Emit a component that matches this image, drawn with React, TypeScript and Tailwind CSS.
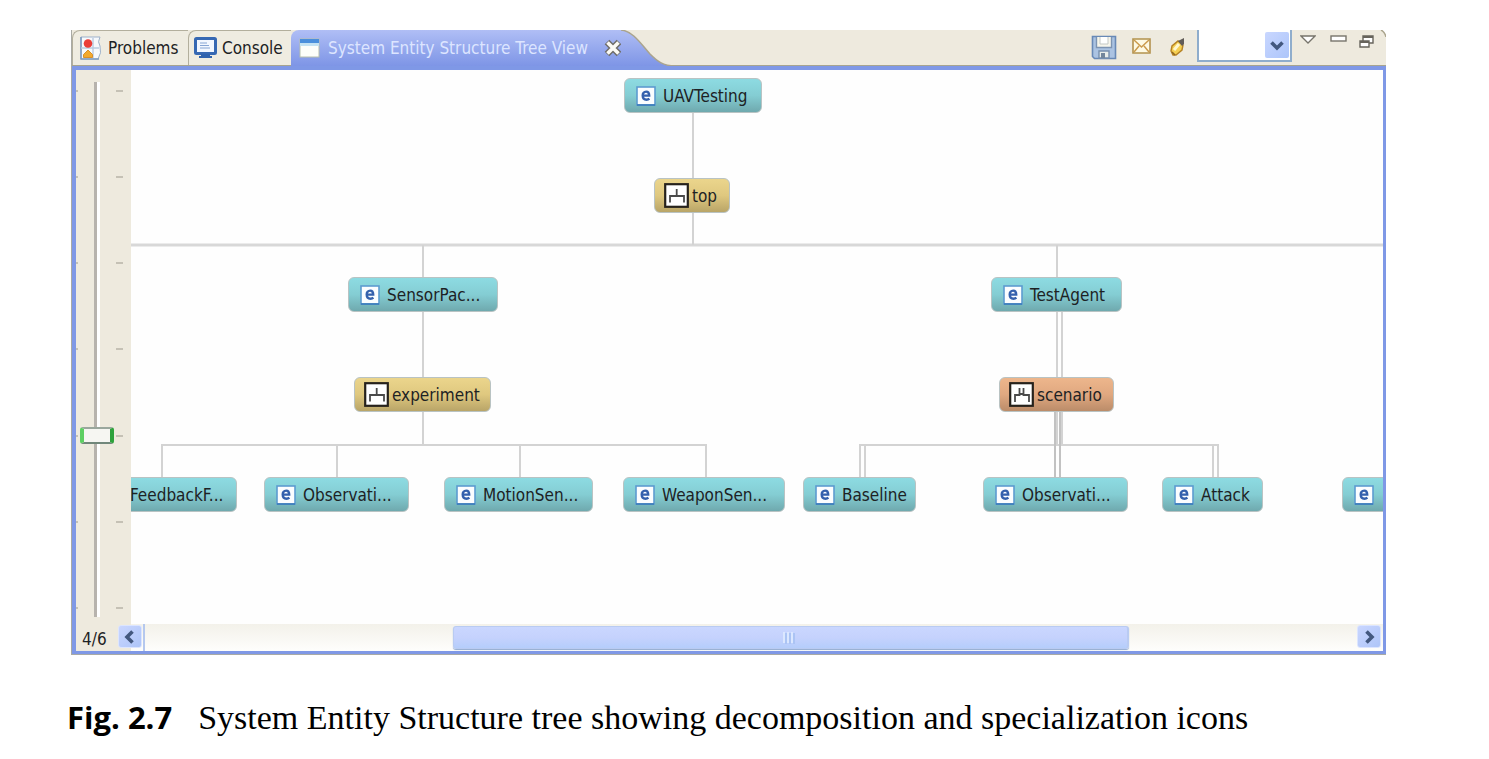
import React from 'react';

type NodeKind = 'entity' | 'aspect' | 'specialization';

interface TreeNode {
  label: string;
  kind: NodeKind;
  place: string;
}

const nodes: TreeNode[] = [
  { label: 'UAVTesting', kind: 'entity', place: 'left-[493px] top-2 w-[138px]' },
  { label: 'top', kind: 'aspect', place: 'left-[523px] top-[108px] w-[76px]' },
  { label: 'SensorPac...', kind: 'entity', place: 'left-[217px] top-[207px] w-[150px]' },
  { label: 'TestAgent', kind: 'entity', place: 'left-[860px] top-[207px] w-[131px]' },
  { label: 'experiment', kind: 'aspect', place: 'left-[223px] top-[307px] w-[137px]' },
  { label: 'scenario', kind: 'specialization', place: 'left-[868px] top-[307px] w-[115px]' },
  { label: 'FeedbackF...', kind: 'entity', place: '-left-[40px] top-[407px] w-[146px]' },
  { label: 'Observati...', kind: 'entity', place: 'left-[133px] top-[407px] w-[145px]' },
  { label: 'MotionSen...', kind: 'entity', place: 'left-[313px] top-[407px] w-[149px]' },
  { label: 'WeaponSen...', kind: 'entity', place: 'left-[492px] top-[407px] w-[162px]' },
  { label: 'Baseline', kind: 'entity', place: 'left-[672px] top-[407px] w-[113px]' },
  { label: 'Observati...', kind: 'entity', place: 'left-[852px] top-[407px] w-[145px]' },
  { label: 'Attack', kind: 'entity', place: 'left-[1031px] top-[407px] w-[101px]' },
  { label: '', kind: 'entity', place: 'left-[1211px] top-[407px] w-[150px]' },
];

const fills: Record<NodeKind, string> = {
  entity: 'gap-[7px] pl-[11px] from-[#8ddbe2] via-[#84cdd3] to-[#6fa9ae]',
  aspect: 'gap-[3px] pl-[9px] from-[#ebd58c] via-[#dfc87f] to-[#b9a568]',
  specialization: 'gap-[3px] pl-[9px] from-[#edb68c] via-[#e0a880] to-[#bb8c69]',
};

function EntityIcon() {
  return (
    <svg width="20" height="20" viewBox="0 0 20 20" className="shrink-0" aria-hidden="true">
      <rect x="1" y="1" width="18" height="18" fill="#fbfdff" stroke="#5d9bd0" strokeWidth="1.6" />
      <path d="M1 19H19" stroke="#3878b8" strokeWidth="1.6" />
      <path d="M6.500 9.600H13.200C13.200 6.700 12.200 5.600 10.200 5.600C7.900 5.600 6.700 7.200 6.700 9.600C6.700 12.200 8 13.700 10.500 13.700C11.700 13.700 12.600 13.400 13.400 12.700" fill="none" stroke="#3561ad" strokeWidth="2.400" />
    </svg>
  );
}

function BranchIcon({ double }: { double: boolean }) {
  return (
    <svg width="25" height="25" viewBox="0 0 25 25" className="shrink-0" aria-hidden="true">
      <rect x="1.200" y="1.200" width="22.600" height="22.600" fill="#fff" stroke="#26221c" strokeWidth="2.200" />
      <path
        d={double ? 'M6 20V13H10.500V6M20 20V13H14.500V6M10.500 12H14.500' : 'M6 19.500V13H20V19.500M12.700 13V6'}
        fill="none"
        stroke="#4a4a4a"
        strokeWidth="1.800"
      />
    </svg>
  );
}

function TreeCanvas() {
  return (
    <div className="relative h-[554px] min-w-0 flex-1 overflow-hidden bg-[#fefefe]">
      <svg className="absolute inset-0 h-full w-full" aria-hidden="true" fill="none" stroke="#d3d3d3" strokeWidth="2">
        <path d="M0 175H4000" strokeWidth="3" stroke="#d8d8d8" />
        <path d="M562 42V175M292 175V374M926 175V208M30 375H576M31 374V408M206 374V408M389 374V408M575 374V408" />
        <path d="M926 240V374M931 240V374M728 375H1088" />
        <path d="M924 340V408M929 340V408" stroke="#c2c2c2" />
        <path d="M729 374V408M734 374V408M1082 374V408M1087 374V408" />
      </svg>
      {nodes.map((node, i) => (
        <div
          key={i}
          className={`absolute flex h-[35px] items-center overflow-hidden rounded-[6px] border border-[#b9c3c3] bg-linear-to-b whitespace-nowrap ${fills[node.kind]} ${node.place}`}
        >
          {node.kind === 'entity' ? <EntityIcon /> : <BranchIcon double={node.kind === 'specialization'} />}
          {node.label && <span>{node.label}</span>}
        </div>
      ))}
    </div>
  );
}

function DepthSlider() {
  return (
    <div className="flex w-[55px] shrink-0 bg-[#eeeade] pt-3">
      <div className="flex h-[535px] w-full">
        <Ticks className="w-[2px]" />
        <input
          type="range"
          min={0}
          max={6}
          defaultValue={4}
          aria-label="Tree depth"
          className="ml-[2px] h-full w-[34px] appearance-none bg-transparent bg-[linear-gradient(to_right,transparent_14px,#b7b3ad_14px,#b7b3ad_17px,#fff_17px,#fff_20px,transparent_20px)] [writing-mode:vertical-lr] [&::-webkit-slider-thumb]:h-[17px] [&::-webkit-slider-thumb]:w-[34px] [&::-webkit-slider-thumb]:appearance-none [&::-webkit-slider-thumb]:rounded-[3px] [&::-webkit-slider-thumb]:border-x-2 [&::-webkit-slider-thumb]:border-y-[4px] [&::-webkit-slider-thumb]:border-t-[#9aa79d] [&::-webkit-slider-thumb]:border-r-[#2ea23c] [&::-webkit-slider-thumb]:border-b-[#71877a] [&::-webkit-slider-thumb]:border-l-[#5dcf62] [&::-webkit-slider-thumb]:bg-[#f6f6f2]"
        />
        <Ticks className="ml-[2px] w-[7px]" />
      </div>
    </div>
  );
}

function Ticks({ className }: { className: string }) {
  return (
    <div className={`flex h-full flex-col justify-between py-2 ${className}`} aria-hidden="true">
      {[0, 1, 2, 3, 4, 5, 6].map((t) => (
        <i key={t} className="block h-[2px] w-full bg-[#c5c1b5]" />
      ))}
    </div>
  );
}

function Chevron({ d }: { d: string }) {
  return (
    <svg width="16" height="16" viewBox="0 0 16 16" aria-hidden="true">
      <path d={d} fill="none" stroke="#43587f" strokeWidth="3.600" />
    </svg>
  );
}

function ScrollRow() {
  const arrow =
    'flex h-[23px] w-6 shrink-0 items-center justify-center rounded-[3px] border border-[#dce5ff] bg-linear-to-br from-[#c9d6ff] to-[#aec5f8]';
  return (
    <div className="flex h-[27px] bg-linear-to-b from-[#f3f1ea] to-[#fefefc]">
      <div className="flex w-[55px] shrink-0 bg-[#eeeade]">
        <output className="w-[42px] shrink-0 pt-1 pl-[6px]">4/6</output>
        <button aria-label="Scroll left" className={`mt-px ${arrow}`}>
          <Chevron d="M10.500 2.500L5 8L10.500 13.500" />
        </button>
      </div>
      <div className="ml-3 flex min-w-0 flex-1 border-l-2 border-[#b5c8ee] pt-[2px]">
        <div
          role="scrollbar"
          aria-label="Horizontal scroll"
          aria-controls="tree"
          aria-valuenow={57}
          className="ml-[25.400%] flex h-[23px] w-[55.800%] items-center justify-center rounded-[3px] border border-r-2 border-[#b9cbf2] bg-linear-to-b from-[#cad7ff] via-[#c5d2fd] to-[#b5cdfb] shadow-[0_1px_1px_#8fa9cf]"
        >
          <svg width="14" height="12" aria-hidden="true">
            <path d="M1 0V11M5 0V11M9 0V11" stroke="#dbe7ff" strokeWidth="2" />
            <path d="M3 1V12M7 1V12M11 1V12" stroke="#abc4f4" strokeWidth="2" />
          </svg>
        </div>
      </div>
      <button aria-label="Scroll right" className={`mt-px mr-[2px] ${arrow}`}>
        <Chevron d="M5.500 2.500L11 8L5.500 13.500" />
      </button>
    </div>
  );
}

function ProblemsIcon() {
  return (
    <svg width="24" height="25" viewBox="0 0 24 25" aria-hidden="true">
      <path d="M2 1H21Q18 6 21 10Q23 17 19 23H2Z" fill="#f7f9fc" stroke="#9db1c9" />
      <path d="M2 1V23H20" fill="none" stroke="#7f9cc0" strokeWidth="1.600" />
      <path d="M14 2V22M2 12H20" stroke="#b9cbe0" strokeWidth="1.400" />
      <circle cx="9" cy="7.500" r="4.300" fill="#ea3d38" />
      <path d="M4.500 21.500V18.500L9 14L13.500 18.500V21.500Z" fill="#f2a92e" stroke="#d9902a" />
    </svg>
  );
}

function ConsoleIcon() {
  return (
    <svg width="23" height="22" viewBox="0 0 23 22" aria-hidden="true">
      <rect x="1.500" y="1.500" width="20" height="15" rx="1" fill="#f2f7ff" stroke="#3668b3" strokeWidth="3" />
      <path d="M6 6H13M6 8.500H15M6 11H16" stroke="#86a5d4" strokeWidth="1.200" />
      <path d="M7 17H16V19H18V21H5V19H7Z" fill="#2f62ad" />
    </svg>
  );
}

function WindowIcon() {
  return (
    <svg width="21" height="20" viewBox="0 0 21 20" aria-hidden="true">
      <rect x="1" y="1" width="19" height="18" fill="#fdfefa" stroke="#b6bfae" />
      <path d="M1 1H20V5H1Z" fill="#4a8fdc" />
      <path d="M1 5H20V8H1Z" fill="#c3e2f3" />
    </svg>
  );
}

function CloseIcon() {
  return (
    <svg width="18" height="18" viewBox="0 0 18 18" aria-hidden="true">
      <path d="M3 3L15 15M15 3L3 15" stroke="#6f6d69" strokeWidth="6.600" />
      <path d="M3.500 3.500L14.500 14.500M14.500 3.500L3.500 14.500" stroke="#fbfaf5" strokeWidth="3.600" />
    </svg>
  );
}

function SaveIcon() {
  return (
    <svg width="26" height="25" viewBox="0 0 26 25" aria-hidden="true">
      <path d="M1.500 1.500H24.500V23.500H3.500L1.500 21.500Z" fill="#abc3e2" stroke="#6889b6" strokeWidth="1.600" />
      <path d="M5.500 2V12.500H20.500V2" fill="#f6f5eb" stroke="#7d94b2" strokeWidth="1.400" />
      <path d="M8 16H18V23H8Z" fill="#e9eee9" stroke="#7790ad" strokeWidth="1.400" />
      <path d="M10 18H14V23H10Z" fill="#73879b" />
      <path d="M9 2V9H17V2" fill="#fff" stroke="#c3c8c5" />
    </svg>
  );
}

function MailIcon() {
  return (
    <svg width="19" height="16" viewBox="0 0 19 16" aria-hidden="true">
      <path d="M1 1H18V15H1Z" fill="#fdf9e4" stroke="#b3924e" strokeWidth="1.600" />
      <path d="M2 2L9.500 9L17 2M2 14L7 8M17 14L12 8" fill="none" stroke="#cb9b4d" strokeWidth="1.500" />
    </svg>
  );
}

function PencilIcon() {
  return (
    <svg width="18" height="20" viewBox="0 0 18 20" aria-hidden="true">
      <path d="M2 14L3 9L9 4L14 8L13 13L7 18H4Z" fill="#f5cf51" stroke="#b58224" strokeWidth="1.400" />
      <path d="M5 13L10 7" stroke="#fff7cf" strokeWidth="3" />
      <path d="M9 4L15 1V7L13 9Z" fill="#625d58" />
      <path d="M3 15L6 18" stroke="#8f651f" strokeWidth="1.500" />
    </svg>
  );
}

function TabBar() {
  const tab = 'flex h-[35px] items-center rounded-tl-[8px] border-t border-l border-[#b3af9d] bg-[#efece1]';
  return (
    <div className="flex h-[36px] items-start border-b border-[#a7a48f] bg-[#eeeade]">
      <div role="tablist" className="flex">
        <button role="tab" aria-selected="false" className={`w-[116px] gap-[5px] pl-[6px] ${tab}`}>
          <ProblemsIcon />
          Problems
        </button>
        <button role="tab" aria-selected="false" className={`w-[103px] gap-[5px] pl-[5px] ${tab}`}>
          <ConsoleIcon />
          Console
        </button>
        <div className="flex h-[36px] rounded-tl-[8px] bg-linear-to-b from-[#b0bef5] to-[#7e95e6]">
          <button role="tab" aria-selected="true" className="flex items-center gap-2 pl-2 whitespace-nowrap text-[#dde5ff]">
            <WindowIcon />
            System Entity Structure Tree View
          </button>
          <button aria-label="Close tab" className="ml-4">
            <CloseIcon />
          </button>
        </div>
        <svg width="54" height="36" viewBox="0 0 54 36" className="-ml-px" aria-hidden="true">
          <defs>
            <linearGradient id="tabEnd" x1="0" y1="0" x2="0" y2="1">
              <stop offset="0" stopColor="#b0bef5" />
              <stop offset="1" stopColor="#7e95e6" />
            </linearGradient>
          </defs>
          <path d="M0 0C12 1 20 14 29 24C36 31 42 36 54 36H0Z" fill="url(#tabEnd)" />
          <path d="M0 0C12 1 20 14 29 24C36 31 42 36 54 36" fill="none" stroke="#aaa48d" strokeWidth="1.500" />
        </svg>
      </div>
      <div className="ml-auto flex items-start">
        <button aria-label="Save" className="mt-[5px]">
          <SaveIcon />
        </button>
        <button aria-label="Mail" className="mt-2 ml-[15px]">
          <MailIcon />
        </button>
        <button aria-label="Edit" className="mt-[7px] ml-[18px]">
          <PencilIcon />
        </button>
        <div className="relative ml-[10px] h-8 w-[95px]">
          <select
            aria-label="Filter"
            className="h-full w-full appearance-none border-x-2 border-b-2 border-[#8fadcc] bg-white"
          >
            <option></option>
          </select>
          <span className="pointer-events-none absolute top-[2px] right-[3px] flex h-[26px] w-6 items-center justify-center rounded-[2px] bg-linear-to-br from-[#c9d7ff] to-[#adc5fa]">
            <Chevron d="M2.500 5.500L8 11L13.500 5.500" />
          </span>
        </div>
        <button aria-label="View menu" className="mt-[5px] ml-2">
          <svg width="16" height="9" viewBox="0 0 16 9" aria-hidden="true">
            <path d="M1 1H15L8 8Z" fill="#fff" stroke="#77746b" strokeWidth="1.300" />
          </svg>
        </button>
        <button aria-label="Minimize" className="mt-[5px] ml-[14px]">
          <svg width="17" height="8" viewBox="0 0 17 8" aria-hidden="true">
            <rect x="1" y="1" width="15" height="5" fill="#fff" stroke="#77746b" strokeWidth="1.400" />
          </svg>
        </button>
        <button aria-label="Restore" className="mt-[5px] ml-3">
          <svg width="15" height="14" viewBox="0 0 15 14" aria-hidden="true">
            <path d="M4 1H14V8H4Z" fill="#fff" stroke="#67645c" strokeWidth="1.400" />
            <path d="M4 2H14" stroke="#67645c" strokeWidth="2" />
            <path d="M1 6H10V12H1Z" fill="#fff" stroke="#67645c" strokeWidth="1.400" />
            <path d="M1 7H10" stroke="#67645c" strokeWidth="2" />
          </svg>
        </button>
        <svg width="12" height="7" viewBox="0 0 12 7" aria-hidden="true">
          <path d="M7 0Q11 2 12 7V0Z" fill="#fff" />
          <path d="M7 0Q11 2 12 7" fill="none" stroke="#aaa48d" strokeWidth="1.500" />
        </svg>
      </div>
    </div>
  );
}

export default function App() {
  return (
    <main className="min-h-screen bg-white pt-[30px] pr-[103px] pl-[71px] text-black">
      <figure>
        <section className="border-b border-l border-[#a9aaa5] font-['DejaVu_Sans_Condensed','DejaVu_Sans',sans-serif] text-[17px] leading-[22px] text-[#1d2224]">
          <TabBar />
          <div id="tree" className="border-4 border-r-[3px] border-b-[3px] border-[#7f98e6]">
            <div className="flex">
              <DepthSlider />
              <TreeCanvas />
            </div>
            <ScrollRow />
          </div>
        </section>
        <figcaption className="-ml-1 flex items-baseline gap-[26px] pt-[42px] whitespace-nowrap">
          <b className="font-['Open_Sans',sans-serif] text-[31px] leading-[40px]">Fig. 2.7</b>
          <span className="font-['Liberation_Serif',serif] text-[34px] leading-[40px]">
            System Entity Structure tree showing decomposition and specialization icons
          </span>
        </figcaption>
      </figure>
    </main>
  );
}
